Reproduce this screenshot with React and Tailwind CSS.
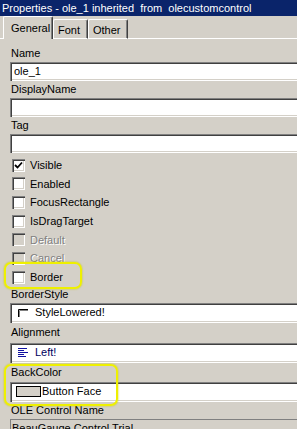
import React from "react";

const sunken =
  "shadow-[inset_1px_1px_0_#808080,inset_2px_2px_0_#404040,inset_-1px_-1px_0_#ffffff,inset_-2px_-2px_0_#d4d0c8]";

function Label({ children, h }) {
  return (
    <div className={`flex items-center pl-[1px] ${h}`}>{children}</div>
  );
}

function Field({ children, h = "h-[19px]" }) {
  return (
    <div className={`w-[300px] bg-white ${sunken} ${h} flex items-center pl-[4px]`}>
      {children}
    </div>
  );
}

function Check({ label, checked, disabled }) {
  return (
    <div className="h-[18.67px] flex items-center pl-[2px]">
      <div
        className={`w-[13px] h-[13px] ${disabled ? "bg-[#d4d0c8]" : "bg-white"} ${sunken} flex items-center justify-center`}
      >
        {checked && (
          <svg width="9" height="9" viewBox="0 0 9 9">
            <path d="M1 4 L3.5 6.5 L8 1.5" stroke="#000" strokeWidth="1.8" fill="none" />
          </svg>
        )}
      </div>
      <span
        className={`ml-[5px] ${disabled ? "text-[#808080] [text-shadow:1px_1px_0_#ffffff]" : "text-black"}`}
      >
        {label}
      </span>
    </div>
  );
}

export default function App() {
  return (
    <div className="relative w-[297px] h-[429px] overflow-hidden bg-[#d4d0c8] font-['Liberation_Sans',Arial,sans-serif] text-[11px] text-black">
      {/* Title bar */}
      <div className="h-[16px] bg-[#0a246a] text-white pl-[2px] leading-[16px] whitespace-pre">
        Properties - ole_1 inherited  from  olecustomcontrol
      </div>

      {/* Tabs */}
      <div className="h-[23px] flex items-end">
        <div className="w-[3px] h-[1px] bg-white" />
        <div className="h-[23px] w-[50px] border-t border-l border-white border-r border-r-[#404040] rounded-t-[2px] flex items-start pt-[3px] pl-[7px] shadow-[inset_-1px_0_0_#808080]">
          General
        </div>
        <div className="h-[20px] w-[35px] border-t border-l border-white border-r border-r-[#404040] border-b border-b-white rounded-t-[2px] flex items-start pt-[2px] pl-[4px] shadow-[inset_-1px_0_0_#808080]">
          Font
        </div>
        <div className="h-[20px] w-[40px] border-t border-l border-white border-r border-r-[#404040] border-b border-b-white rounded-t-[2px] flex items-start pt-[2px] pl-[4px] shadow-[inset_-1px_0_0_#808080]">
          Other
        </div>
        <div className="flex-1 h-[1px] bg-white" />
      </div>

      {/* Panel */}
      <div className="pl-[10px] pt-[6px] flex flex-col">
        <Label h="h-[17px]">Name</Label>
        <Field>ole_1</Field>
        <Label h="h-[17px]">DisplayName</Label>
        <Field />
        <Label h="h-[17px]">Tag</Label>
        <Field />

        <div className="h-[3px]" />
        <Check label="Visible" checked />
        <Check label="Enabled" />
        <Check label="FocusRectangle" />
        <Check label="IsDragTarget" />
        <Check label="Default" disabled />
        <Check label="Cancel" disabled />
        <Check label="Border" />

        <Label h="h-[16px]">BorderStyle</Label>
        <Field h="h-[20px]">
          <svg width="10" height="8" viewBox="0 0 10 8" className="ml-[4px] mr-[7px]">
            <path d="M0.5 8 V0.5 H10" stroke="#000" fill="none" />
            <path d="M1.5 8 V1.5 H10" stroke="#808080" fill="none" />
          </svg>
          StyleLowered!
        </Field>

        <Label h="h-[20px]">Alignment</Label>
        <Field h="h-[20px]">
          <svg width="10" height="9" viewBox="0 0 10 9" className="ml-[4px] mr-[7px]">
            <path d="M0 0.5 H9 M0 2.5 H6 M0 4.5 H10 M0 6.5 H6 M0 8.5 H8" stroke="#1010a0" fill="none" />
          </svg>
          <span className="text-[#000060]">Left!</span>
        </Field>

        <Label h="h-[19px]">BackColor</Label>
        <Field h="h-[20px]">
          <div className="ml-[2px] w-[25px] h-[11px] border border-black bg-[#d4d0c8] mr-[1px]" />
          Button Face
        </Field>

        <Label h="h-[17px]">OLE Control Name</Label>
        <div className="w-[300px] h-[20px] bg-[#d4d0c8] shadow-[inset_1px_1px_0_#808080,inset_-1px_-1px_0_#ffffff] flex items-center pl-[2px]">
          BeauGauge Control Trial
        </div>
      </div>

      {/* Yellow highlights */}
      <div className="absolute left-[4px] top-[262px] w-[78px] h-[27px] border-2 border-[#eef000] rounded-[7px] shadow-[0_0_2px_#c8c800]" />
      <div className="absolute left-[4px] top-[364px] w-[114px] h-[42px] border-2 border-[#eef000] rounded-[7px] shadow-[0_0_2px_#c8c800]" />
    </div>
  );
}
